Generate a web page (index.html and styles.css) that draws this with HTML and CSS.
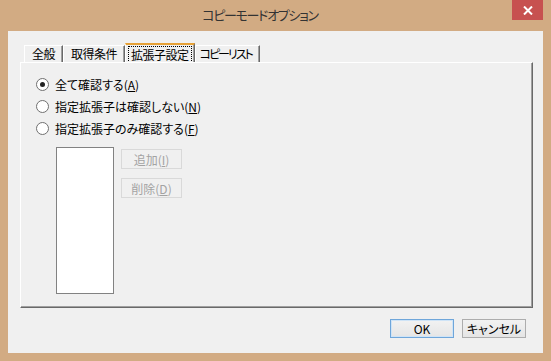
FILE: index.html
```html
<!DOCTYPE html>
<html>

<head>
    <title>コピーモードオプション</title>
    <link rel="stylesheet" href="styles.css">
</head>

<body>
    <div class="window">
        <div class="titlebar">
            <span class="title">コピーモードオプション</span>
            <span class="close">
                <svg width="10" height="9" viewBox="0 0 10 9">
                    <path d="M1 0.5 L9 8.5 M9 0.5 L1 8.5" stroke="#fff" stroke-width="2" fill="none"/>
                </svg>
            </span>
        </div>

        <div class="client">
            <!-- Tab strip -->
            <div class="tabs">
                <div class="tab">全般</div>
                <div class="tab">取得条件</div>
                <div class="tab active"><span class="focus">拡張子設定</span></div>
                <div class="tab narrow">コピーリスト</div>
            </div>

            <div class="panel">
                <label class="radio checked"><span class="circle"></span>全て確認する(<u>A</u>)</label>
                <label class="radio"><span class="circle"></span>指定拡張子は確認しない(<u>N</u>)</label>
                <label class="radio"><span class="circle"></span>指定拡張子のみ確認する(<u>F</u>)</label>

                <div class="ext-area">
                    <div class="listbox"></div>
                    <div class="ext-buttons">
                        <button class="btn" disabled>追加(<u>I</u>)</button>
                        <button class="btn" disabled>削除(<u>D</u>)</button>
                    </div>
                </div>
            </div>

            <div class="footer">
                <button class="btn default">OK</button>
                <button class="btn">キャンセル</button>
            </div>
        </div>
    </div>
</body>

</html>
```

FILE: styles.css
```css
body {
    margin: 0;
    font-family: "Noto Sans CJK JP", "Noto Sans", sans-serif;
    font-feature-settings: "palt";
    font-size: 12px;
    color: #000;
}

.window {
    width: 551px;
    height: 361px;
    box-sizing: border-box;
    padding: 0 8px 8px;
    background-color: #d2ab83;
    display: flex;
    flex-direction: column;
}

/* Title bar */
.titlebar {
    height: 31px;
    display: flex;
    align-items: flex-start;
}

.title {
    flex: 1;
    text-align: center;
    margin-top: 5px;
    font-size: 13px;
    line-height: 20px;
    letter-spacing: -1.3px;
    color: #333;
}

.close {
    width: 31px;
    height: 20px;
    background-color: #c75150;
    display: flex;
    align-items: center;
    justify-content: center;
}

.client {
    flex: 1;
    background-color: #f0f0f0;
    display: flex;
    flex-direction: column;
    padding: 12px 10px 0 12px;
}

/* Tabs */
.tabs {
    display: flex;
    align-items: flex-end;
    height: 19px;
    padding-left: 4px;
}

.tab {
    height: 17px;
    box-sizing: border-box;
    padding: 0 7px;
    line-height: 16px;
    letter-spacing: -0.5px;
    border-top: 1px solid #fff;
    border-left: 1px solid #fff;
    border-right: 1px solid #696969;
    box-shadow: inset -1px 0 #a0a0a0;
    white-space: nowrap;
}

.tab.narrow {
    padding: 0 7px 0 4px;
    letter-spacing: -2px;
}

.tab.active {
    height: 19px;
    padding: 1px 2px 0;
    border-top: 2px solid #e6a137;
    line-height: 15px;
}

.focus {
    display: block;
    padding: 0 2px;
    border: 1px dotted #000;
}

/* Tab page */
.panel {
    height: 246px;
    box-sizing: border-box;
    border-top: 1px solid #fff;
    border-left: 1px solid #fff;
    border-right: 1px solid #696969;
    border-bottom: 1px solid #696969;
    box-shadow: inset -1px -1px #a0a0a0;
    padding: 10px 0 0 15px;
}

.radio {
    display: flex;
    align-items: center;
    height: 22px;
    white-space: nowrap;
}

.circle {
    width: 11px;
    height: 11px;
    border: 1px solid #707070;
    border-radius: 50%;
    background: #fff;
    margin-right: 6px;
    display: flex;
    align-items: center;
    justify-content: center;
}

.radio.checked .circle::after {
    content: "";
    width: 5px;
    height: 5px;
    border-radius: 50%;
    background: #222;
}

.ext-area {
    display: flex;
    margin: 8px 0 0 20px;
}

.listbox {
    width: 56px;
    height: 145px;
    background: #fff;
    border: 1px solid #828282;
}

.ext-buttons {
    display: flex;
    flex-direction: column;
    gap: 9px;
    margin: 2px 0 0 7px;
}

/* Buttons */
.btn {
    width: 64px;
    height: 19px;
    padding: 0;
    font-family: inherit;
    font-feature-settings: "palt";
    font-size: 12px;
    line-height: 17px;
    color: #000;
    border: 1px solid #adadad;
    background: linear-gradient(#f2f2f2, #e5e5e5);
}

.btn:disabled {
    width: 61px;
    height: 20px;
    color: #a3a3a3;
    border-color: #d9d9d9;
    background: #f0f0f0;
}

.btn.default {
    border-color: #6fa6da;
    box-shadow: inset 0 0 0 1px #cfe4f7;
}

.footer {
    display: flex;
    justify-content: flex-end;
    gap: 8px;
    margin-top: 11px;
    padding-right: 7px;
}
```
